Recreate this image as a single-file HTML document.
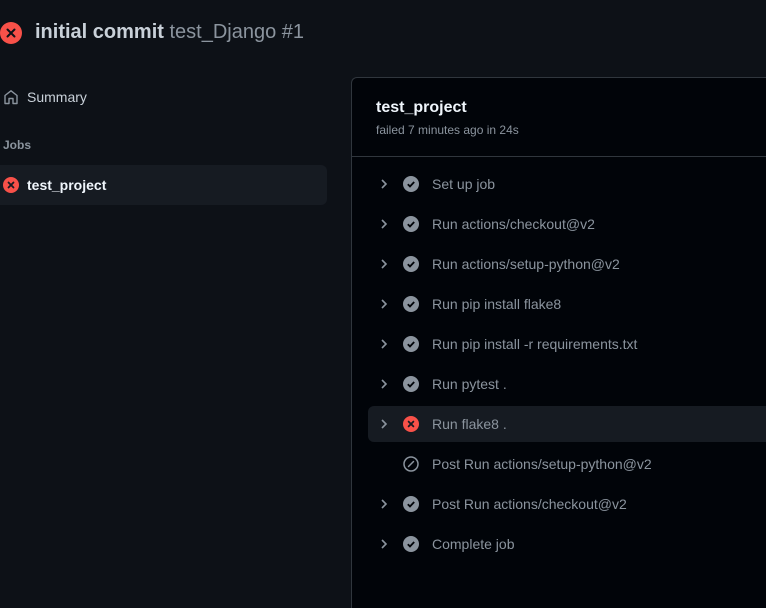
<!DOCTYPE html><html><head><style>
html,body{margin:0;width:766px;height:608px;overflow:hidden}
body{background:#0d1117;font-family:"Liberation Sans",sans-serif;position:relative;color:#c9d1d9}
.a{position:absolute}
.row{position:absolute;left:368px;width:398px;height:36px;border-radius:6px 0 0 6px}
.row .t{position:absolute;left:64px;top:10px;font-size:14px;color:#8b949e;white-space:nowrap}
.row svg{position:absolute}
</style></head><body>
<svg class="a" style="left:0;top:22px" width="22" height="22" viewBox="0 0 22 22"><circle cx="11" cy="11" r="11" fill="#f85149"/><path d="M7.5 7.5l7 7M14.5 7.5l-7 7" stroke="#0d1117" stroke-width="2" stroke-linecap="round"/></svg>
<div class="a" style="left:35px;top:21px;font-size:20px;white-space:nowrap"><b style="color:#c9d1d9">initial commit</b> <span style="color:#8b949e">test_Django #1</span></div>
<svg class="a" style="left:3px;top:89px" width="16" height="16" viewBox="0 0 16 16"><path d="M2 14.5V6.5L8 1.8l6 4.7v8H10v-5H6v5z" fill="none" stroke="#8b949e" stroke-width="1.4" stroke-linejoin="round"/></svg>
<div class="a" style="left:27px;top:89px;font-size:14px">Summary</div>
<div class="a" style="left:3px;top:138px;font-size:12px;font-weight:bold;color:#8b949e">Jobs</div>
<div class="a" style="left:0;top:165px;width:327px;height:40px;border-radius:0 6px 6px 0;background:#161b22"></div>
<svg class="a" style="left:3px;top:177px" width="16" height="16" viewBox="0 0 16 16"><circle cx="8" cy="8" r="8" fill="#f85149"/><path d="M5.5 5.5l5 5M10.5 5.5l-5 5" stroke="#161b22" stroke-width="1.8" stroke-linecap="round"/></svg>
<div class="a" style="left:27px;top:177px;font-size:14px;font-weight:bold;color:#f0f6fc">test_project</div>
<div class="a" style="left:351px;top:77px;width:414px;height:530px;background:#010409;border:1px solid #30363d;border-right:none;border-bottom:none;border-radius:6px 0 0 0"></div>
<div class="a" style="left:352px;top:156px;width:414px;height:1px;background:#30363d"></div>
<div class="a" style="left:376px;top:99px;font-size:16px;font-weight:bold;color:#f0f6fc">test_project</div>
<div class="a" style="left:376px;top:123px;font-size:12px;color:#8b949e">failed 7 minutes ago in 24s</div>

<div class="row" style="top:166px"><svg style="left:9px;top:11px" width="14" height="14"><path d="M5 3l4 4-4 4" fill="none" stroke="#8b949e" stroke-width="1.6"/></svg><svg style="left:35px;top:10px" width="16" height="16"><circle cx="8" cy="8" r="8" fill="#8b949e"/><path d="M4.8 8.2l2.2 2.2 4.2-4.4" fill="none" stroke="#010409" stroke-width="1.8"/></svg><div class="t">Set up job</div></div>
<div class="row" style="top:206px"><svg style="left:9px;top:11px" width="14" height="14"><path d="M5 3l4 4-4 4" fill="none" stroke="#8b949e" stroke-width="1.6"/></svg><svg style="left:35px;top:10px" width="16" height="16"><circle cx="8" cy="8" r="8" fill="#8b949e"/><path d="M4.8 8.2l2.2 2.2 4.2-4.4" fill="none" stroke="#010409" stroke-width="1.8"/></svg><div class="t">Run actions/checkout@v2</div></div>
<div class="row" style="top:246px"><svg style="left:9px;top:11px" width="14" height="14"><path d="M5 3l4 4-4 4" fill="none" stroke="#8b949e" stroke-width="1.6"/></svg><svg style="left:35px;top:10px" width="16" height="16"><circle cx="8" cy="8" r="8" fill="#8b949e"/><path d="M4.8 8.2l2.2 2.2 4.2-4.4" fill="none" stroke="#010409" stroke-width="1.8"/></svg><div class="t">Run actions/setup-python@v2</div></div>
<div class="row" style="top:286px"><svg style="left:9px;top:11px" width="14" height="14"><path d="M5 3l4 4-4 4" fill="none" stroke="#8b949e" stroke-width="1.6"/></svg><svg style="left:35px;top:10px" width="16" height="16"><circle cx="8" cy="8" r="8" fill="#8b949e"/><path d="M4.8 8.2l2.2 2.2 4.2-4.4" fill="none" stroke="#010409" stroke-width="1.8"/></svg><div class="t">Run pip install flake8</div></div>
<div class="row" style="top:326px"><svg style="left:9px;top:11px" width="14" height="14"><path d="M5 3l4 4-4 4" fill="none" stroke="#8b949e" stroke-width="1.6"/></svg><svg style="left:35px;top:10px" width="16" height="16"><circle cx="8" cy="8" r="8" fill="#8b949e"/><path d="M4.8 8.2l2.2 2.2 4.2-4.4" fill="none" stroke="#010409" stroke-width="1.8"/></svg><div class="t">Run pip install -r requirements.txt</div></div>
<div class="row" style="top:366px"><svg style="left:9px;top:11px" width="14" height="14"><path d="M5 3l4 4-4 4" fill="none" stroke="#8b949e" stroke-width="1.6"/></svg><svg style="left:35px;top:10px" width="16" height="16"><circle cx="8" cy="8" r="8" fill="#8b949e"/><path d="M4.8 8.2l2.2 2.2 4.2-4.4" fill="none" stroke="#010409" stroke-width="1.8"/></svg><div class="t">Run pytest .</div></div>
<div class="row" style="top:406px;background:#161b22"><svg style="left:9px;top:11px" width="14" height="14"><path d="M5 3l4 4-4 4" fill="none" stroke="#8b949e" stroke-width="1.6"/></svg><svg style="left:35px;top:10px" width="16" height="16"><circle cx="8" cy="8" r="8" fill="#f85149"/><path d="M5.6 5.6l4.8 4.8M10.4 5.6l-4.8 4.8" stroke="#161b22" stroke-width="1.8" stroke-linecap="round"/></svg><div class="t">Run flake8 .</div></div>
<div class="row" style="top:446px"><svg style="left:35px;top:10px" width="16" height="16"><circle cx="8" cy="8" r="7" fill="none" stroke="#8b949e" stroke-width="1.5"/><path d="M10.5 5.5l-5 5" stroke="#8b949e" stroke-width="1.5" stroke-linecap="round"/></svg><div class="t">Post Run actions/setup-python@v2</div></div>
<div class="row" style="top:486px"><svg style="left:9px;top:11px" width="14" height="14"><path d="M5 3l4 4-4 4" fill="none" stroke="#8b949e" stroke-width="1.6"/></svg><svg style="left:35px;top:10px" width="16" height="16"><circle cx="8" cy="8" r="8" fill="#8b949e"/><path d="M4.8 8.2l2.2 2.2 4.2-4.4" fill="none" stroke="#010409" stroke-width="1.8"/></svg><div class="t">Post Run actions/checkout@v2</div></div>
<div class="row" style="top:526px"><svg style="left:9px;top:11px" width="14" height="14"><path d="M5 3l4 4-4 4" fill="none" stroke="#8b949e" stroke-width="1.6"/></svg><svg style="left:35px;top:10px" width="16" height="16"><circle cx="8" cy="8" r="8" fill="#8b949e"/><path d="M4.8 8.2l2.2 2.2 4.2-4.4" fill="none" stroke="#010409" stroke-width="1.8"/></svg><div class="t">Complete job</div></div>
</body></html>
